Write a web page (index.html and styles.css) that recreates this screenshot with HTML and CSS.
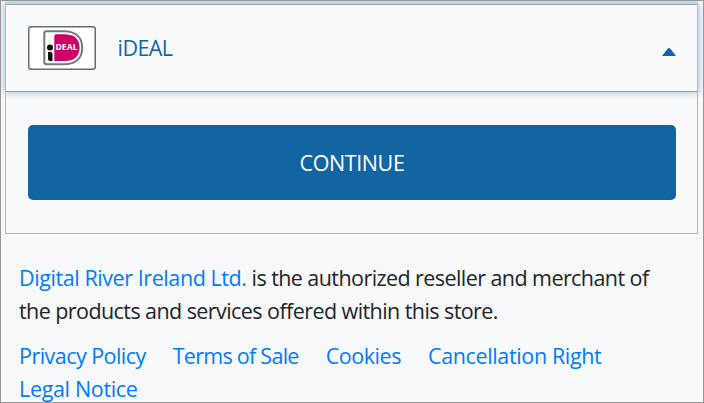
FILE: index.html
```html
<!DOCTYPE html>
<html lang="en">
<head>
<meta charset="utf-8">
<title>Checkout</title>
<link rel="stylesheet" href="styles.css">
</head>
<body>
<main class="page">
  <section class="payment">
    <header class="method">
      <svg class="logo" width="68" height="44" viewBox="0 0 68 44" role="img" aria-label="iDEAL">
        <rect x=".75" y=".75" width="66.5" height="42.5" rx="2.5" fill="#fff" stroke="#6c6c6c" stroke-width="1.5"/>
        <path d="M18.300 5.200H36C48 5.200 54.200 11.500 54.200 21.700S48 38.200 36 38.200H18.300Q16.300 38.200 16.300 36.200V7.200Q16.300 5.200 18.300 5.200Z" fill="#fff" stroke="#777" stroke-width="2"/>
        <path d="M26.300 10Q26.300 8.300 28 8.300H36C47 8.300 51.500 13.500 51.500 21.700S47 35 36 35H26.300Z" fill="#cc0066"/>
        <circle cx="22" cy="21.600" r="3" fill="#111"/>
        <path d="M20 26H22.500Q24.500 26 24.500 28V35H22Q20 35 20 33Z" fill="#111"/>
        <text class="logo-text" x="27.500" y="24.300" textLength="22" lengthAdjust="spacingAndGlyphs">DEAL</text>
      </svg>
      <span class="name">iDEAL</span>
      <svg class="arrow" width="14" height="8" viewBox="0 0 14 8"><path d="M0 8 5.800 .5Q7-.5 8.200 .5L14 8Z" fill="#1264a3"/></svg>
    </header>
    <div class="body"><button class="continue">CONTINUE</button></div>
  </section>
  <footer class="footer">
    <p class="legal"><a class="company" href="#">Digital River Ireland Ltd.</a> is the authorized reseller and merchant of<br>the products and services offered within this store.</p>
    <nav class="links"><a class="privacy" href="#">Privacy Policy</a><a class="terms" href="#">Terms of Sale</a><a href="#">Cookies</a><a class="cancellation" href="#">Cancellation Right</a><a class="notice" href="#">Legal Notice</a></nav>
  </footer>
</main>
</body>
</html>
```
FILE: styles.css
```css
* { box-sizing: border-box; }
body { margin: 0; background: #f8f9fb; }
.page {
  width: 704px;
  height: 403px;
  padding: 3px 5px 0 4px;
  overflow: hidden;
  border: 1px solid #979797;
  color: #212529;
  font: 21.5px/33px "Open Sans", "Noto Sans", sans-serif;
}
.payment {
  height: 230px;
  border: 1px solid #b4b5b7;
  border-top: 0;
  box-shadow: 0 -4px 0 #d5e0eb;
}
.method {
  display: flex;
  align-items: center;
  height: 88px;
  margin: 0 -1px;
  padding: 0 21px 0 22px;
  background: #f8f9fb;
  border: 1px solid #94a3b0;
  border-left-color: #b4bbc2;
  border-right-color: #b4bbc2;
  box-shadow: 0 0 7px 1px #a9c5dc;
}
.logo-text { fill: #fff; font: bold 8px "Open Sans", sans-serif; }
.name { margin: -2px 0 0 21.5px; color: #1264a3; letter-spacing: -.55px; }
.arrow { margin: 7px 0 0 auto; }
.body { padding: 33px 22px 0; }
.continue {
  display: block;
  width: 648px;
  height: 75px;
  padding: 0;
  border: 0;
  border-radius: 5px;
  background: #1264a3;
  color: #fff;
  font: inherit;
  letter-spacing: -.4px;
}
.footer { padding: 27px 14px 0; }
.legal { margin: 0 0 12px; white-space: nowrap; letter-spacing: -.57px; }
.company { letter-spacing: -.42px; }
.links { display: flex; flex-wrap: wrap; column-gap: 27px; letter-spacing: -.45px; }
.privacy { letter-spacing: -.54px; }
.terms { letter-spacing: -.73px; }
.cancellation { letter-spacing: -.36px; }
.notice { letter-spacing: -.33px; }
a { color: #007bff; text-decoration: none; }
```
